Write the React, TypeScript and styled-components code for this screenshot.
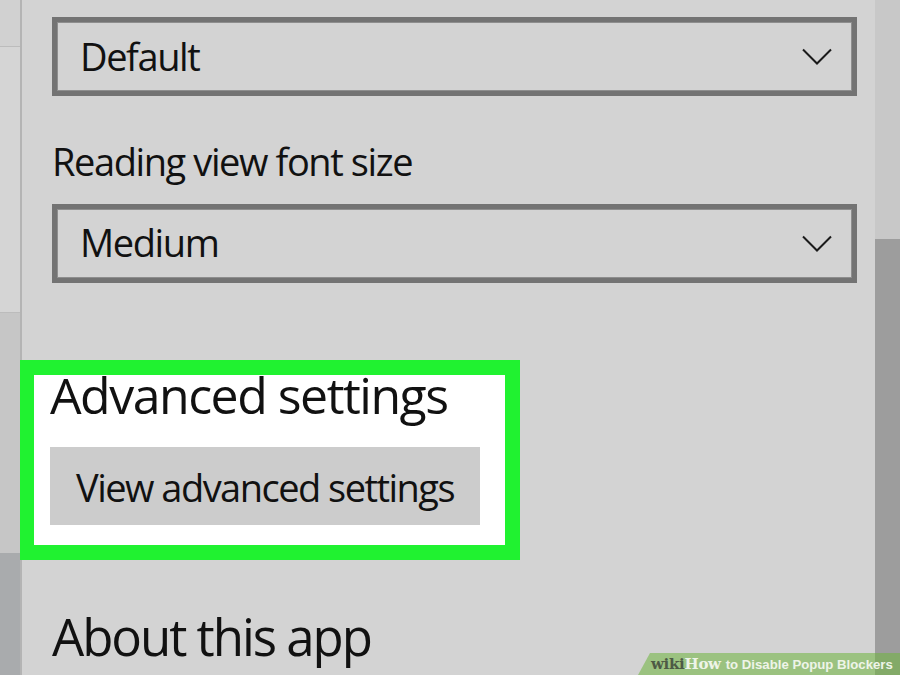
import React from 'react';
import styled, { createGlobalStyle } from 'styled-components';

const Global = createGlobalStyle`
  html, body { margin: 0; padding: 0; }
  body {
    width: 900px;
    height: 675px;
    overflow: hidden;
    font-family: "Open Sans", "Noto Sans", sans-serif;
    color: #111;
  }
`;

const Screen = styled.div`
  position: relative;
  width: 900px;
  height: 675px;
  overflow: hidden;
  display: flex;
  background: #d3d3d3;
`;

const SideStrip = styled.div`
  width: 20px;
  flex: none;
  display: flex;
  flex-direction: column;
  border-right: 2px solid #b4b4b4;
`;

const StripBlock = styled.div<{ $h?: number; $bg: string; $line?: boolean }>`
  flex: ${(p) => (p.$h ? `0 0 ${p.$h}px` : '1 1 auto')};
  background: ${(p) => p.$bg};
  border-bottom: ${(p) => (p.$line ? '1px solid #bcbcbc' : 'none')};
  box-sizing: border-box;
`;

const Panel = styled.div`
  flex: 1;
  display: flex;
  flex-direction: column;
  padding: 17px 18px 0 30px;
  min-width: 0;
`;

const Select = styled.div`
  height: 79px;
  box-sizing: border-box;
  border: 5px solid #737373;
  box-shadow: inset 0 0 0 1px #8e8e8e;
  display: flex;
  align-items: center;
  justify-content: space-between;
  padding: 0 20px 0 23px;
  font-size: 38px;
  line-height: 1.2;
  letter-spacing: -0.037em;
`;

const Label = styled.div<{ $mt: number }>`
  margin-top: ${(p) => p.$mt}px;
  font-size: 38px;
  line-height: 1.2;
  letter-spacing: -0.037em;
`;

const Highlight = styled.div`
  margin: 77px 0 0 -32px;
  width: 500px;
  box-sizing: border-box;
  border: 15px solid #20f230;
  border-left-width: 14px;
  background: #ffffff;
  padding: 0 0 20px 16px;
  display: flex;
  flex-direction: column;
  align-items: flex-start;
`;

const Heading = styled.div<{ $mt: number; $size: number; $ls: number }>`
  margin-top: ${(p) => p.$mt}px;
  font-size: ${(p) => p.$size}px;
  letter-spacing: ${(p) => p.$ls}em;
  line-height: 1;
  white-space: nowrap;
`;

const Button = styled.div`
  margin-top: 27px;
  width: 430px;
  height: 78px;
  box-sizing: border-box;
  background: #cccccc;
  display: flex;
  align-items: center;
  padding: 4px 0 0 26px;
  font-size: 38px;
  line-height: 1.2;
  letter-spacing: -0.04em;
  white-space: nowrap;
`;

const Scrollbar = styled.div`
  width: 25px;
  flex: none;
  display: flex;
  flex-direction: column;
`;

const Track = styled.div`
  flex: 0 0 239px;
  background: #c8c8c8;
`;

const Thumb = styled.div`
  flex: 1;
  background: #9d9d9d;
`;

const Watermark = styled.div`
  position: absolute;
  right: 0;
  bottom: 0;
  width: 262px;
  height: 22px;
  background: rgba(110, 180, 60, 0.55);
  clip-path: polygon(12px 0, 100% 0, 100% 100%, 0 100%);
  display: flex;
  align-items: center;
  padding-left: 13px;
  box-sizing: border-box;
  white-space: nowrap;
`;

const Wiki = styled.span<{ $light?: boolean }>`
  font-family: "DejaVu Serif", "Liberation Serif", serif;
  font-weight: bold;
  font-size: 15px;
  letter-spacing: -0.3px;
  color: ${(p) => (p.$light ? '#eef4e8' : '#4d5a45')};
`;

const WmText = styled.span`
  font-family: "Liberation Sans", Arial, sans-serif;
  font-weight: bold;
  font-size: 13.2px;
  color: #eef4e8;
  margin-left: 5px;
`;

const Chevron = () => (
  <svg width="30" height="17" viewBox="0 0 30 17">
    <polyline points="1,1.5 15,15.5 29,1.5" fill="none" stroke="#1a1a1a" strokeWidth="2" />
  </svg>
);

export default function App() {
  return (
    <>
      <Global />
      <Screen>
        <SideStrip>
          <StripBlock $h={47} $bg="#d1d1d1" $line />
          <StripBlock $h={266} $bg="#d5d5d5" $line />
          <StripBlock $h={240} $bg="#c6c6c6" />
          <StripBlock $bg="#a9abad" />
        </SideStrip>
        <Panel>
          <Select>
            <span>Default</span>
            <Chevron />
          </Select>
          <Label $mt={43}>Reading view font size</Label>
          <Select style={{ marginTop: 19 }}>
            <span>Medium</span>
            <Chevron />
          </Select>
          <Highlight>
            <Heading $mt={-5} $size={50} $ls={-0.03}>Advanced settings</Heading>
            <Button>View advanced settings</Button>
          </Highlight>
          <Heading $mt={51} $size={51} $ls={-0.04}>About this app</Heading>
        </Panel>
        <Scrollbar>
          <Track />
          <Thumb />
        </Scrollbar>
        <Watermark>
          <Wiki>wiki</Wiki>
          <Wiki $light>How</Wiki>
          <WmText>to Disable Popup Blockers</WmText>
        </Watermark>
      </Screen>
    </>
  );
}
